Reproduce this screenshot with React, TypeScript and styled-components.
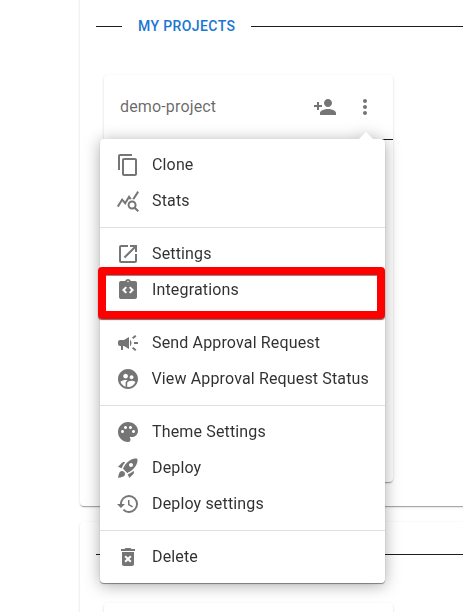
import React from "react";
import styled, { createGlobalStyle } from "styled-components";
import {
  MdCampaign,
  MdContentCopy,
  MdDeleteForever,
  MdHistory,
  MdIntegrationInstructions,
  MdLaunch,
  MdMoreVert,
  MdPalette,
  MdPersonAdd,
  MdQueryStats,
  MdRocketLaunch,
  MdSupervisedUserCircle,
} from "react-icons/md";
import type { IconType } from "react-icons";

const GlobalStyle = createGlobalStyle`
  *, *::before, *::after { box-sizing: border-box; }
  html, body { margin: 0; overflow: hidden; }
  body {
    background: #fff;
    color: rgba(0, 0, 0, 0.81);
    font-family: Roboto, "Open Sans", sans-serif;
    font-size: 16px;
    letter-spacing: 0.15px;
  }
`;

const Page = styled.main`
  position: relative;
  display: flex;
  flex-direction: column;
  gap: 16px;
  height: 612px;
  padding-left: 80px;
  overflow: hidden;
`;

const elevation = `
  box-shadow: 0 2px 1px -1px rgba(0, 0, 0, 0.2), 0 1px 1px 0 rgba(0, 0, 0, 0.14),
    0 1px 3px 0 rgba(0, 0, 0, 0.12);
`;

const Section = styled.section<{ $first?: boolean }>`
  flex: none;
  width: 480px;
  height: ${(p) => (p.$first ? 526 : 300)}px;
  margin-top: ${(p) => (p.$first ? -20 : 0)}px;
  padding: ${(p) => (p.$first ? 36 : 22)}px 16px 0;
  border-radius: 4px;
  background: #fff;
  ${elevation}
`;

const Heading = styled.div`
  display: flex;
  align-items: center;
  height: 20px;
`;

const Rule = styled.span<{ $width?: number }>`
  flex: ${(p) => (p.$width ? `0 0 ${p.$width}px` : "1")};
  height: 1px;
  background: #1f1b20;
`;

const Title = styled.h2`
  margin: 0 15.5px 0 16px;
  color: #1976d2;
  font-size: 14px;
  font-weight: 500;
  line-height: 20px;
  letter-spacing: 0.4px;
  white-space: nowrap;
`;

const Card = styled.article<{ $top: number }>`
  width: 289px;
  height: 407px;
  margin: ${(p) => p.$top}px 0 0 8px;
  border-radius: 4px;
  background: #fff;
  ${elevation}
`;

const CardHeader = styled.header`
  display: flex;
  align-items: center;
  height: 65px;
  padding: 0 16px;
  border-bottom: 1px solid #1f1b20;
  color: rgba(0, 0, 0, 0.6);
`;

const ProjectName = styled.span`
  flex: 1;
  padding-bottom: 2px;
`;

const IconButton = styled.button`
  display: flex;
  align-items: center;
  justify-content: center;
  width: 40px;
  height: 40px;
  padding: 0;
  border: 0;
  background: none;
  color: #757575;

  &:last-child { margin-right: -8px; }
`;

const Menu = styled.div`
  position: absolute;
  top: 139px;
  left: 100px;
  width: 285px;
  border-radius: 4px;
  background: #fff;
  box-shadow: 0 1px 1px rgba(0, 0, 0, 0.42);
  filter: drop-shadow(0 2px 8px rgba(0, 0, 0, 0.32));

  &::before {
    content: "";
    position: absolute;
    top: 0;
    right: 14px;
    width: 10px;
    height: 10px;
    background: #fff;
    transform: translateY(-50%) rotate(45deg);
  }
`;

const MenuGroup = styled.ul`
  position: relative;
  margin: 0;
  padding: 8px 0;
  list-style: none;

  & + & { border-top: 1px solid #e0e0e0; }
`;

const MenuItem = styled.li`
  display: flex;
  align-items: center;
  height: 36px;
  padding: 0 16px;
  white-space: nowrap;
`;

const ItemLabel = styled.span`
  padding-bottom: 2px;
`;

const ItemIcon = styled.span`
  display: flex;
  width: 36px;
  color: #757575;
`;

const Highlight = styled.div`
  position: absolute;
  top: 267px;
  left: 98px;
  width: 287px;
  height: 52px;
  border: 8px solid #f00;
  border-radius: 4px;
  box-shadow: 0 1px 1px rgba(0, 0, 0, 0.6), inset 0 1px 0 rgba(0, 0, 0, 0.45);
`;

const groups: { icon: IconType; label: string }[][] = [
  [
    { icon: MdContentCopy, label: "Clone" },
    { icon: MdQueryStats, label: "Stats" },
  ],
  [
    { icon: MdLaunch, label: "Settings" },
    { icon: MdIntegrationInstructions, label: "Integrations" },
  ],
  [
    { icon: MdCampaign, label: "Send Approval Request" },
    { icon: MdSupervisedUserCircle, label: "View Approval Request Status" },
  ],
  [
    { icon: MdPalette, label: "Theme Settings" },
    { icon: MdRocketLaunch, label: "Deploy" },
    { icon: MdHistory, label: "Deploy settings" },
  ],
  [{ icon: MdDeleteForever, label: "Delete" }],
];

export default function App() {
  return (
    <>
      <GlobalStyle />
      <Page>
        <Section $first>
          <Heading>
            <Rule $width={26} />
            <Title>MY PROJECTS</Title>
            <Rule />
          </Heading>
          <Card $top={39}>
            <CardHeader>
              <ProjectName>demo-project</ProjectName>
              <IconButton aria-label="Add member">
                <MdPersonAdd size={24} />
              </IconButton>
              <IconButton aria-label="More">
                <MdMoreVert size={24} />
              </IconButton>
            </CardHeader>
          </Card>
        </Section>
        <Section>
          <Heading>
            <Rule />
          </Heading>
          <Card $top={39} />
        </Section>
        <Menu>
          {groups.map((items, i) => (
            <MenuGroup key={i}>
              {items.map(({ icon: Icon, label }) => (
                <MenuItem key={label}>
                  <ItemIcon>
                    <Icon size={24} />
                  </ItemIcon>
                  <ItemLabel>{label}</ItemLabel>
                </MenuItem>
              ))}
            </MenuGroup>
          ))}
        </Menu>
        <Highlight />
      </Page>
    </>
  );
}
